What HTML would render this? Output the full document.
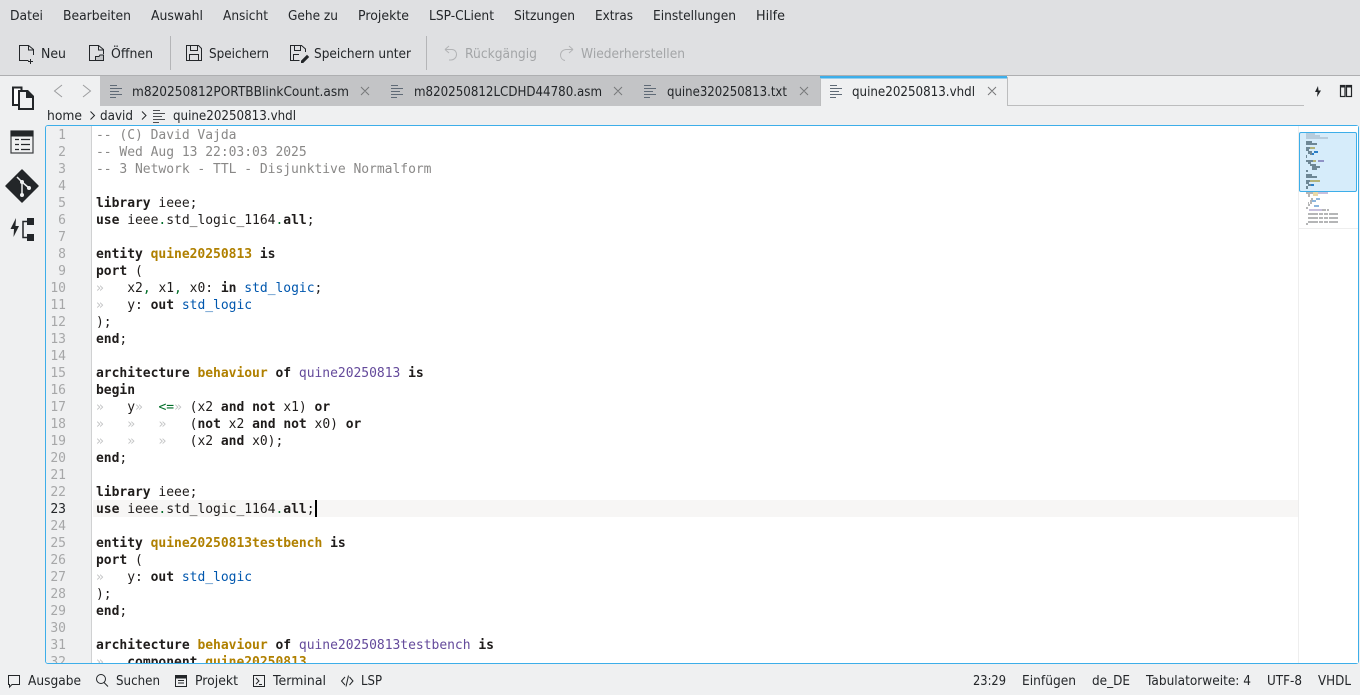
<!DOCTYPE html>
<html><head><meta charset="utf-8"><style>
html,body{margin:0;padding:0;width:1360px;height:695px;overflow:hidden;background:#eff0f1}
svg{position:absolute;left:0;top:0}
svg text{font-family:"DejaVu Sans",sans-serif;font-size:13px;fill:#232629}
.d{fill:#a3a5a7}
#ed{position:absolute;left:45px;top:125px;width:1314px;height:539px;box-sizing:border-box;border:1px solid #3daee9;border-radius:3px;background:#fff;overflow:hidden}
#gut{position:absolute;left:0;top:0;width:46px;height:539px;background:#eff0f1;border-right:1px solid #d0d1d2;box-sizing:border-box}
#cur{position:absolute;left:47px;top:374px;width:1205px;height:17px;background:#f7f6f5}
#nums{position:absolute;left:0;top:1px;width:20px;text-align:right;color:#a6a7a8}
#nums b{font-weight:normal;color:#232629}
pre{margin:0;font-family:"DejaVu Sans Mono",monospace;font-size:13px;line-height:17px}
#code{position:absolute;left:50px;top:1px;color:#1f1c1b;letter-spacing:-0.025px}
#code b{font-weight:bold}
.c{color:#898887}.t{color:#0057ae}.g{color:#b08000;font-weight:bold}.p{color:#644a9b}.o{color:#006e28}.w{color:#c4c5c6}.n{color:#006e28}
#caret{position:absolute;left:269px;top:374px;width:2px;height:17px;background:#000}
</style></head><body>
<svg width="1360" height="695" viewBox="0 0 1360 695" fill="none">
<rect width="1360" height="75" fill="#dfe0e2"/>
<rect y="75" width="1360" height="1" fill="#aeafb1"/>
<rect x="100" y="76" width="720" height="30" fill="#c3c4c6"/>
<rect x="820" y="76" width="188" height="30" fill="#eff0f1"/>
<rect x="820" y="76" width="187" height="2.5" fill="#3daee9"/>
<rect x="820" y="78" width="1" height="28" fill="#bcbdbe"/>
<rect x="1007" y="77" width="1" height="29" fill="#bcbdbe"/>
<rect x="1007" y="105" width="297" height="1" fill="#bcbdbe"/>
<rect x="170" y="36" width="1" height="34" fill="#b4b5b7"/>
<rect x="426" y="36" width="1" height="34" fill="#b4b5b7"/>

<text x="10" y="20" textLength="33" lengthAdjust="spacingAndGlyphs">Datei</text>
<text x="63" y="20" textLength="68" lengthAdjust="spacingAndGlyphs">Bearbeiten</text>
<text x="151" y="20" textLength="52" lengthAdjust="spacingAndGlyphs">Auswahl</text>
<text x="223" y="20" textLength="45" lengthAdjust="spacingAndGlyphs">Ansicht</text>
<text x="288" y="20" textLength="50" lengthAdjust="spacingAndGlyphs">Gehe zu</text>
<text x="358" y="20" textLength="51" lengthAdjust="spacingAndGlyphs">Projekte</text>
<text x="429" y="20" textLength="65" lengthAdjust="spacingAndGlyphs">LSP-CLient</text>
<text x="514" y="20" textLength="61" lengthAdjust="spacingAndGlyphs">Sitzungen</text>
<text x="595" y="20" textLength="38" lengthAdjust="spacingAndGlyphs">Extras</text>
<text x="653" y="20" textLength="83" lengthAdjust="spacingAndGlyphs">Einstellungen</text>
<text x="756" y="20" textLength="29" lengthAdjust="spacingAndGlyphs">Hilfe</text>

<text x="41" y="58" textLength="25" lengthAdjust="spacingAndGlyphs">Neu</text>
<text x="111" y="58" textLength="42" lengthAdjust="spacingAndGlyphs">Öffnen</text>
<text x="209" y="58" textLength="60" lengthAdjust="spacingAndGlyphs">Speichern</text>
<text x="314" y="58" textLength="97" lengthAdjust="spacingAndGlyphs">Speichern unter</text>
<text x="465" y="58" textLength="72" lengthAdjust="spacingAndGlyphs" class="d">Rückgängig</text>
<text x="581" y="58" textLength="104" lengthAdjust="spacingAndGlyphs" class="d">Wiederherstellen</text>

<g stroke="#232629" stroke-width="1">
<path d="M28.5 60.5H19.5V45.5H28.5L33.5 49.5V55M28.5 45.5V50H33.5"/>
<path d="M28 61.5H33M30.5 59V64" />
<path d="M98 60.5H89.5V45.5H98.5L103.5 49.5V54M98.5 45.5V50H103.5"/>
<path d="M95.5 60.5V56.5H99L100 55H103.5V60.5Z" fill="#232629" fill-opacity=".15"/>
<path d="M186.5 45.5H198.5L201.5 48.5V60.5H186.5ZM190.5 45.5V50.5H197.5V45.5M189.5 60.5V54.5H198.5V60.5"/>
<path d="M299.5 60.5H290.5V45.5H301.5L305.5 49V52M294.5 45.5V50.5H300.5V45.5M293.5 60.5V54.5H299"/>
<path d="M301.5 61L307 55.5L308.5 57L303 62.5H301.5Z" fill="#232629"/>
</g>
<g stroke="#b2b3b5" stroke-width="1">
<path d="M445 49.5L449 46M445 49.5L449 53M445 49.5H452C455 49.5 456.5 52 456.5 54.5C456.5 57.5 454 60 451 60H449"/>
<path d="M573 49.5L569 46M573 49.5L569 53M573 49.5H566.5C563 49.5 560.5 52 560.5 55C560.5 58 562.5 60 565 60.5"/>
</g>
<path d="M62 85L54.500 91L62 97M83 85L90.500 91L83 97" stroke="#9c9d9f" stroke-width="1"/>

<g stroke="#5f6a76" stroke-width="1">
<path d="M110 85.5H117M110 88.5H122M110 91.5H119M110 94.5H122M110 97.5H116"/>
<path d="M391 85.5H398M391 88.5H403M391 91.5H400M391 94.5H403M391 97.5H397"/>
<path d="M644 85.5H651M644 88.5H656M644 91.5H653M644 94.5H656M644 97.5H650"/>
<path d="M830 85.5H837M830 88.5H842M830 91.5H839M830 94.5H842M830 97.5H836"/>
</g>
<g stroke="#4d4f52" stroke-width="1"><path d="M153 110.5H160M153 113.5H165M153 116.5H162M153 119.5H165M153 122.5H159"/></g>
<text x="132" y="96" textLength="217" lengthAdjust="spacingAndGlyphs">m820250812PORTBBlinkCount.asm</text>
<text x="414" y="96" textLength="188" lengthAdjust="spacingAndGlyphs">m820250812LCDHD44780.asm</text>
<text x="667" y="96" textLength="120" lengthAdjust="spacingAndGlyphs">quine320250813.txt</text>
<text x="852" y="96" textLength="123" lengthAdjust="spacingAndGlyphs">quine20250813.vhdl</text>
<g stroke="#77787a" stroke-width="1">
<path d="M361 87L369 95M369 87L361 95M614 87L622 95M622 87L614 95M800 87L808 95M808 87L800 95M988 87L996 95M996 87L988 95"/>
</g>
<path d="M1318 86L1315 92H1317.5L1317 97L1321 90.5H1318.5Z" fill="#232629"/>
<g stroke="#232629" stroke-width="1.2"><rect x="1340.5" y="85.5" width="4.5" height="11"/><rect x="1346.5" y="85.5" width="5" height="11"/></g>
<rect x="1340" y="85" width="5.5" height="2.5" fill="#232629"/><rect x="1346" y="85" width="6" height="2.5" fill="#232629"/>

<text x="47" y="120" textLength="35" lengthAdjust="spacingAndGlyphs">home</text>
<text x="100" y="120" textLength="33" lengthAdjust="spacingAndGlyphs">david</text>
<text x="173" y="120" textLength="123" lengthAdjust="spacingAndGlyphs">quine20250813.vhdl</text>
<path d="M90.5 111.5L94.5 115.5L90.5 119.5M142 111.5L146 115.5L142 119.5" stroke="#232629"/>

<!-- sidebar -->
<path d="M13 87.5H21.5V105H13Z" fill="#fff" stroke="#232629" stroke-width="2"/>
<path d="M19 91H27L33 97V109H19Z" fill="#eff0f1" stroke="#232629" stroke-width="2"/>
<path d="M26 90V98H34V96L28 90Z" fill="#232629"/>
<rect x="11" y="131" width="22" height="22" stroke="#3a3c3f" stroke-width="1.2"/>
<rect x="10.5" y="130.5" width="23" height="6" fill="#232629"/>
<path d="M15 139.500H19M21 139.500H30M15 144.500H19M21 144.500H30M15 149.500H19M21 149.500H30" stroke="#232629" stroke-width="1.200"/>
<path d="M22 170L38 186L22 202L6 186Z" fill="#232629" stroke="#232629" stroke-width="1.5" stroke-linejoin="round"/>
<path d="M17 177L22 182M22 182V195M22 182L29 188" stroke="#eff0f1" stroke-width="1.5"/>
<circle cx="22" cy="182" r="2" fill="#eff0f1"/><circle cx="22" cy="195" r="2" fill="#eff0f1"/><circle cx="29" cy="188" r="2" fill="#eff0f1"/>
<path d="M16 218L10.5 229H14L13.5 237L19 226H15.5Z" fill="#232629"/>
<rect x="27" y="218" width="7" height="7" fill="#232629"/><rect x="27" y="234" width="7" height="7" fill="#232629"/>
<path d="M27 221.5H23V237.5H27" stroke="#232629" stroke-width="1.5"/>

<!-- status -->
<text x="28" y="685" textLength="53" lengthAdjust="spacingAndGlyphs">Ausgabe</text>
<text x="116" y="685" textLength="44" lengthAdjust="spacingAndGlyphs">Suchen</text>
<text x="195" y="685" textLength="43" lengthAdjust="spacingAndGlyphs">Projekt</text>
<text x="273" y="685" textLength="53" lengthAdjust="spacingAndGlyphs">Terminal</text>
<text x="361" y="685" textLength="21" lengthAdjust="spacingAndGlyphs">LSP</text>
<text x="973" y="685" textLength="33" lengthAdjust="spacingAndGlyphs">23:29</text>
<text x="1022" y="685" textLength="54" lengthAdjust="spacingAndGlyphs">Einfügen</text>
<text x="1092" y="685" textLength="38" lengthAdjust="spacingAndGlyphs">de_DE</text>
<text x="1146" y="685" textLength="105" lengthAdjust="spacingAndGlyphs">Tabulatorweite: 4</text>
<text x="1267" y="685" textLength="35" lengthAdjust="spacingAndGlyphs">UTF-8</text>
<text x="1318" y="685" textLength="33" lengthAdjust="spacingAndGlyphs">VHDL</text>
<g stroke="#232629" stroke-width="1">
<path d="M8.5 675.500H19.5V684.500H12L9.500 687V684.500H8.500Z"/>
<circle cx="101" cy="679" r="4.5"/><path d="M104 682.5L108 686.5"/>
<rect x="175.5" y="675.5" width="11" height="11"/><path d="M178 680.5H184M178 683H184"/><rect x="175.5" y="675.5" width="11" height="2.5" fill="#232629"/>
<rect x="253.5" y="675.5" width="11" height="11"/><path d="M256 678L259 681L256 684M259 684.5H262"/>
<path d="M345 677L341.5 681L345 685M349.5 677L353 681L349.5 685M348.500 675.5L346 686.5"/>
</g>
</svg>

<div id="ed">
<div id="gut"></div>
<div id="cur"></div>
<pre id="nums">1
2
3
4
5
6
7
8
9
10
11
12
13
14
15
16
17
18
19
20
21
22
<b>23</b>
24
25
26
27
28
29
30
31
32</pre>
<pre id="code"><span class="c">-- (C) David Vajda</span>
<span class="c">-- Wed Aug 13 22:03:03 2025</span>
<span class="c">-- 3 Network - TTL - Disjunktive Normalform</span>

<b>library</b> ieee;
<b>use</b> ieee<span class="n">.</span>std_logic_1164<span class="n">.</span><b>all</b>;

<b>entity</b> <span class="g">quine20250813</span> <b>is</b>
<b>port</b> (
<span class="w">»</span>   x2<span class="n">,</span> x1<span class="n">,</span> x0: <b>in</b> <span class="t">std_logic</span>;
<span class="w">»</span>   y: <b>out</b> <span class="t">std_logic</span>
);
<b>end</b>;

<b>architecture</b> <span class="g">behaviour</span> <b>of</b> <span class="p">quine20250813</span> <b>is</b>
<b>begin</b>
<span class="w">»</span>   y<span class="w">»</span>  <span class="o">&lt;=</span><span class="w">»</span> (x2 <b>and</b> <b>not</b> x1) <b>or</b>
<span class="w">»</span>   <span class="w">»</span>   <span class="w">»</span>   (<b>not</b> x2 <b>and</b> <b>not</b> x0) <b>or</b>
<span class="w">»</span>   <span class="w">»</span>   <span class="w">»</span>   (x2 <b>and</b> x0);
<b>end</b>;

<b>library</b> ieee;
<b>use</b> ieee<span class="n">.</span>std_logic_1164<span class="n">.</span><b>all</b>;

<b>entity</b> <span class="g">quine20250813testbench</span> <b>is</b>
<b>port</b> (
<span class="w">»</span>   y: <b>out</b> <span class="t">std_logic</span>
);
<b>end</b>;

<b>architecture</b> <span class="g">behaviour</span> <b>of</b> <span class="p">quine20250813testbench</span> <b>is</b>
<span class="w">»</span>   <b>component</b> <span class="g">quine20250813</span></pre>
<div id="caret"></div>
</div>

<svg width="1360" height="695" viewBox="0 0 1360 695" style="pointer-events:none">
<rect x="1298" y="126" width="60" height="537" fill="#fff"/>
<rect x="1298" y="126" width="1" height="537" fill="#eeeeee"/>
<rect x="1298" y="228" width="60" height="1" fill="#eeeeee"/>
<rect x="1299.5" y="132.5" width="57" height="59" rx="1.5" fill="#d6ecfa" stroke="#3daee9"/>
<g fill="#b7ccdc"><rect x="1306" y="133" width="9" height="2"/><rect x="1306" y="135" width="14" height="2"/><rect x="1306" y="137" width="22" height="2"/></g>
<g fill="#6e8795">
<rect x="1306" y="141" width="6" height="2"/><rect x="1306" y="143" width="11" height="2"/>
<rect x="1306" y="147" width="4" height="2"/><rect x="1306" y="149" width="3" height="2"/><rect x="1308" y="151" width="2" height="3"/><rect x="1310" y="151" width="2" height="2"/><rect x="1310" y="153" width="2" height="2"/><rect x="1306" y="155" width="1" height="3"/>
<rect x="1306" y="160" width="7" height="2"/><rect x="1308" y="162" width="3" height="2"/><rect x="1310" y="164" width="6" height="2"/><rect x="1312" y="166" width="8" height="2"/><rect x="1312" y="168" width="5" height="2"/><rect x="1306" y="170" width="2" height="2"/>
<rect x="1306" y="174" width="6" height="2"/><rect x="1306" y="176" width="11" height="2"/>
<rect x="1306" y="180" width="4" height="2"/><rect x="1306" y="182" width="3" height="2"/><rect x="1308" y="184" width="3" height="2"/><rect x="1306" y="186" width="2" height="3"/>
</g>
<g fill="#b2b37a"><rect x="1310" y="147" width="5" height="2"/><rect x="1313" y="160" width="3" height="2"/><rect x="1310" y="180" width="10" height="2"/></g>
<g fill="#2a7fc8"><rect x="1314" y="151" width="4" height="2"/><rect x="1312" y="153" width="2" height="2"/><rect x="1311" y="184" width="3" height="2"/></g>
<rect x="1318" y="160" width="6" height="2" fill="#8f93c6"/>
<g fill="#b5b6b7">
<rect x="1306" y="192" width="7" height="2"/><rect x="1308" y="194" width="2" height="3"/><rect x="1311" y="198" width="2" height="2"/><rect x="1310" y="200" width="2" height="4"/><rect x="1308" y="202" width="1" height="3"/><rect x="1308" y="204" width="2" height="2"/><rect x="1306" y="207" width="2" height="2"/>
<rect x="1322" y="209" width="4" height="2"/><rect x="1327" y="209" width="2" height="2"/>
<rect x="1308" y="213" width="10" height="2"/><rect x="1319" y="213" width="4" height="2"/><rect x="1324" y="213" width="4" height="2"/><rect x="1329" y="213" width="9" height="2"/>
<rect x="1308" y="217" width="10" height="2"/><rect x="1319" y="217" width="4" height="2"/><rect x="1324" y="217" width="4" height="2"/><rect x="1329" y="217" width="9" height="2"/>
<rect x="1308" y="221" width="10" height="2"/><rect x="1319" y="221" width="4" height="2"/><rect x="1324" y="221" width="4" height="2"/><rect x="1329" y="221" width="9" height="2"/>
<rect x="1306" y="223" width="2" height="2"/>
</g>
<g fill="#e9d9a8"><rect x="1313" y="192" width="5" height="4"/></g>
<g fill="#c7bfdc"><rect x="1318" y="192" width="10" height="2"/><rect x="1309" y="209" width="13" height="2"/></g>
<g fill="#8cb6de"><rect x="1316" y="198" width="4" height="2"/><rect x="1312" y="200" width="4" height="2"/><rect x="1314" y="205" width="5" height="2"/></g>
</svg>
</body></html>
